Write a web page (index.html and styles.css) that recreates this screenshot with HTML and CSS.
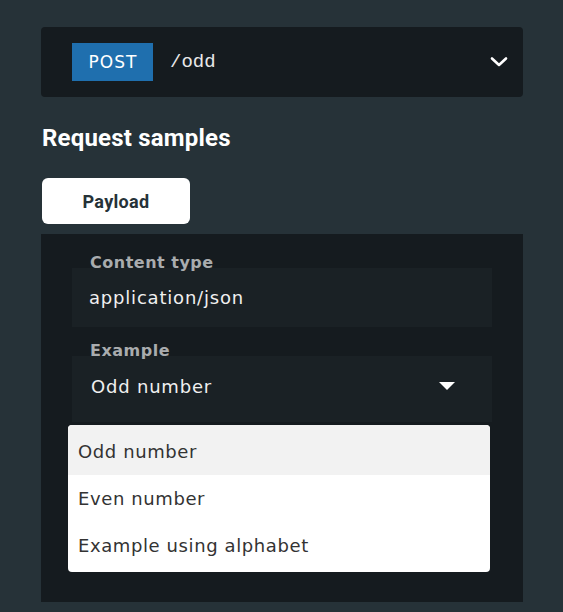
FILE: index.html
```html
<!DOCTYPE html>
<html>
<head>
<meta charset="utf-8">
<link rel="stylesheet" href="styles.css">
</head>
<body>
<div class="panel">
  <div class="endpoint">
    <span class="method">POST</span>
    <span class="path">/odd</span>
    <svg class="chevron" width="18" height="12" viewBox="0 0 18 12"><path d="M2 2.5 L9 9 L16 2.5" fill="none" stroke="#fff" stroke-width="2.6" stroke-linecap="round" stroke-linejoin="round"/></svg>
  </div>
  <h3 class="title">Request samples</h3>
  <div class="tabs"><button class="tab">Payload</button></div>
  <div class="sample">
    <div class="label">Content type</div>
    <div class="box">application/json</div>
    <div class="label">Example</div>
    <div class="box select">
      <span>Odd number</span>
      <svg class="caret" width="16" height="9" viewBox="0 0 16 9"><path d="M0 0 H16 L8 8 Z" fill="#fff"/></svg>
      <ul class="menu">
        <li class="active">Odd number</li>
        <li>Even number</li>
        <li>Example using alphabet</li>
      </ul>
    </div>
  </div>
</div>
</body>
</html>
```
FILE: styles.css
```css
html, body {
  margin: 0;
  padding: 0;
  background: #263238;
  width: 563px;
  height: 612px;
  overflow: hidden;
}
* { box-sizing: border-box; }
.panel {
  padding: 27px 40px 0 41px;
  font-family: "DejaVu Sans", sans-serif;
}
.endpoint {
  height: 70px;
  background: #151b1f;
  border-radius: 4px;
  display: flex;
  align-items: center;
  padding: 0 15px 0 31px;
}
.method {
  background: #1f6fae;
  color: #fff;
  font-size: 17px;
  letter-spacing: 1px;
  width: 81px;
  height: 38px;
  line-height: 38px;
  text-align: center;
  padding-left: 1px;
}
.path {
  font-family: "Liberation Mono", monospace;
  color: #e8e8e8;
  font-size: 19px;
  margin-left: 17px;
  flex: 1;
}
.chevron { display: block; }
.title {
  font-family: Roboto, sans-serif;
  font-weight: 700;
  font-size: 24px;
  letter-spacing: 0.2px;
  color: #fff;
  margin: 27px 0 0 1px;
  line-height: 28px;
}
.tabs {
  margin-top: 26px;
  display: flex;
}
.tab {
  margin-left: 1px;
  width: 148px;
  height: 46px;
  background: #fff;
  border: none;
  border-radius: 6px;
  font-family: Roboto, sans-serif;
  font-weight: 700;
  font-size: 18px;
  letter-spacing: 0.3px;
  color: #263238;
}
.sample {
  margin-top: 10px;
  background: #151b1f;
  height: 368px;
  padding: 20px 31px 0 31px;
}
.label {
  font-weight: 700;
  color: #a9acae;
  font-size: 16px;
  letter-spacing: 0.5px;
  line-height: 18px;
  margin-left: 18px;
  position: relative;
  z-index: 1;
}
.box {
  margin-top: -4px;
  background: #1a2125;
  height: 59px;
  color: #f0f0f0;
  font-size: 18px;
  letter-spacing: 0.8px;
  display: flex;
  align-items: center;
  padding-left: 17px;
  margin-bottom: 15px;
}
.select {
  position: relative;
  height: 66px;
  padding-left: 19px;
  padding-right: 37px;
  padding-bottom: 6px;
  justify-content: space-between;
}
.menu {
  position: absolute;
  left: -4px;
  top: 69px;
  width: 422px;
  margin: 0;
  padding: 0 0 3px;
  list-style: none;
  background: #fff;
  border-radius: 4px;
  overflow: hidden;
  letter-spacing: 0.6px;
}
.menu li {
  height: 47px;
  line-height: 47px;
  color: #333;
  font-size: 18px;
  padding-left: 10px;
}
.menu li.active {
  background: #f2f2f2;
  height: 50px;
  line-height: 53px;
}
```
